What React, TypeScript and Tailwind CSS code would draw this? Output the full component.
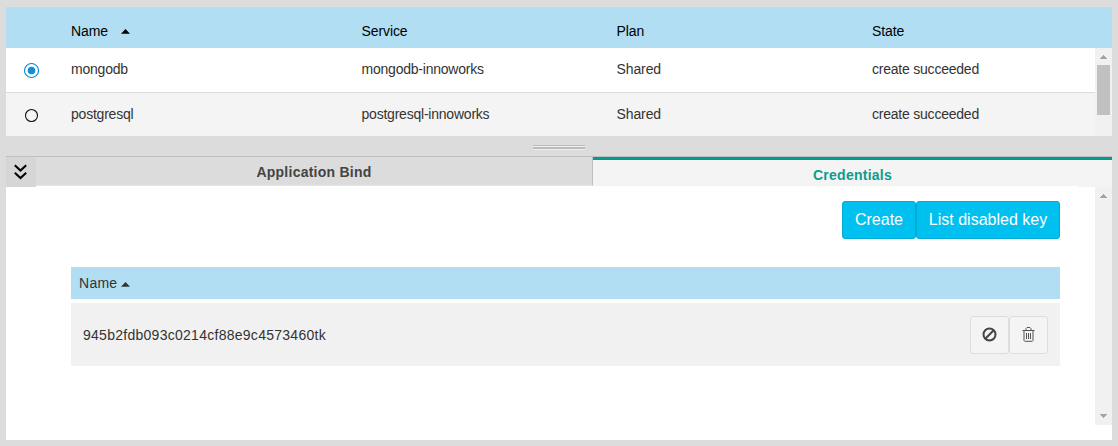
import React from "react";

const services = [
  { name: "mongodb", service: "mongodb-innoworks", plan: "Shared", state: "create succeeded", selected: true },
  { name: "postgresql", service: "postgresql-innoworks", plan: "Shared", state: "create succeeded", selected: false },
];

function Caret({ className = "" }: { className?: string }) {
  return (
    <svg width="9" height="5" viewBox="0 0 9 5" className={className} fill="currentColor">
      <path d="M4.5 0 9 4.8H0Z" />
    </svg>
  );
}

function Arrow({ down = false }: { down?: boolean }) {
  return (
    <svg width="7" height="4" viewBox="0 0 7 4" fill="#a3a3a3" shapeRendering="crispEdges">
      <path d={down ? "M0 0H7V1H6V2H5V3H4V4H3V3H2V2H1V1H0Z" : "M3 0H4V1H5V2H6V3H7V4H0V3H1V2H2V1H3Z"} />
    </svg>
  );
}

function Radio({ selected }: { selected: boolean }) {
  return (
    <svg width="15" height="15" viewBox="0 0 15 15" fill="none">
      <circle cx="7.5" cy="7.5" r={selected ? 7 : 6} stroke={selected ? "#0e8fd0" : "#111"} strokeWidth="1.1" fill="#fff" fillOpacity={selected ? 1 : 0} />
      {selected && <circle cx="7.5" cy="7.5" r="3.8" fill="#0e8fd8" />}
    </svg>
  );
}

function ServiceTable() {
  return (
    <section className="h-[129px] shrink-0 bg-white text-sm leading-5 text-[#333]">
      <div className="flex h-[41px] bg-[#b1def3] pt-[14px] tracking-[-0.1px] text-black">
        <div className="w-[65px]" />
        <div className="flex w-[290.5px]">
          Name
          <Caret className="mt-2 ml-[13px]" />
        </div>
        <div className="w-[255px]">Service</div>
        <div className="w-[255.5px]">Plan</div>
        <div>State</div>
      </div>
      <div className="flex h-[88px]">
        <div className="grow tracking-[-0.22px]">
          {services.map((s) => (
            <div key={s.name} className="flex h-[45px] border-b border-[#dcdcdc] pt-[11px] last:h-[43px] last:border-b-0 last:bg-[#f4f4f4]">
              <div className="w-[65px] pt-1 pl-[18px]"><Radio selected={s.selected} /></div>
              <div className="w-[290.5px]">{s.name}</div>
              <div className="w-[255px]">{s.service}</div>
              <div className="w-[255.5px] tracking-[-0.1px]">{s.plan}</div>
              <div>{s.state}</div>
            </div>
          ))}
        </div>
        <div className="flex w-[17px] flex-col items-center bg-[#f1f1f1] pt-[7px]">
          <Arrow />
          <div className="mt-1.5 h-[50px] w-[13px] bg-[#c1c1c1]" />
        </div>
      </div>
    </section>
  );
}

function Splitter() {
  return (
    <div className="flex h-5 shrink-0 justify-center pt-[9px]">
      <div className="h-[5px] w-[52px]">
        <div className="h-px bg-[#bbb]" />
        <div className="h-px bg-[#eee]" />
        <div className="h-0.5 bg-[#bbb]" />
        <div className="h-px bg-[#eee]" />
      </div>
    </div>
  );
}

function TabBar() {
  return (
    <div className="flex h-[31px] shrink-0 border-t border-[#bfbfbf] bg-white text-center text-sm font-bold tracking-[0.25px]">
      <button className="flex w-[30px] justify-center bg-[#d6d6d6] pt-[7px] pr-px">
        <svg width="13" height="16" viewBox="0 0 13 16" fill="none" stroke="#000" strokeWidth="2">
          <path d="M.8 1.3 6.5 6.6l5.7-5.3M.8 8.8l5.7 5.3 5.7-5.3" />
        </svg>
      </button>
      <div className="h-[29px] w-[557px] border-r border-b border-r-[#bfbfbf] border-b-[#e6e6e6] bg-[#dcdcdc] pt-[5px] leading-5 text-[#444]">Application Bind</div>
      <div className="flex grow flex-col">
        <div className="h-[29px] border-t-[3px] border-[#009c8e] bg-[#f4f4f4] pt-[5px] leading-5 text-[#0d9c8c]">Credentials</div>
        <div className="h-px w-[34px] self-end bg-[#f4f4f4]" />
      </div>
    </div>
  );
}

function Credentials() {
  return (
    <section className="flex h-[253px] bg-white text-sm text-[#333]">
      <div className="grow pt-3.5 pr-[35px] pl-[65px]">
        <div className="flex justify-end text-base text-white">
          <button className="h-[38px] w-[74px] rounded-[3px] border border-[#00acd6] bg-[#00c0ef]">Create</button>
          <button className="h-[38px] w-[144px] rounded-[3px] border border-[#00acd6] bg-[#00c0ef]">List disabled key</button>
        </div>
        <div className="mt-7 flex h-8 items-center bg-[#b1def3] pl-2 tracking-[0.27px]">
          Name
          <Caret className="mt-0.5 ml-1" />
        </div>
        <div className="mt-1 flex h-[63px] items-center bg-[#f1f1f1] pr-3 pl-3">
          <span className="grow tracking-[0.27px]">945b2fdb093c0214cf88e9c4573460tk</span>
          <button className="flex h-[38px] w-[39px] items-center justify-center rounded-[3px] border border-[#ddd] bg-[#f4f4f4] pb-px">
            <svg width="15" height="15" viewBox="0 0 15 15" fill="none" stroke="#444" strokeWidth="2">
              <circle cx="7.5" cy="7.5" r="6" />
              <path d="M3.3 11.7 11.7 3.3" />
            </svg>
          </button>
          <button className="flex h-[38px] w-[39px] items-center justify-center rounded-[3px] border border-[#ddd] bg-[#f4f4f4] pb-px">
            <svg width="13" height="15" viewBox="0 0 13 15" fill="none" stroke="#555">
              <path d="M.5 3.5h12M4 3.5v-2l1-1h3l1 1v2M2 3.5v10l.7.8h7.6l.7-.8v-10M4.5 6v6M6.5 6v6M8.5 6v6" />
            </svg>
          </button>
        </div>
      </div>
      <div className="flex h-[238px] w-[17px] flex-col items-center justify-between bg-[#f1f1f1] py-[7px]">
        <Arrow />
        <Arrow down />
      </div>
    </section>
  );
}

export default function App() {
  return (
    <main className="flex h-[446px] w-[1118px] flex-col bg-[#dcdcdc] px-1.5 pt-[7px] font-['Liberation_Sans',Arial,sans-serif]">
      <ServiceTable />
      <Splitter />
      <TabBar />
      <Credentials />
    </main>
  );
}
